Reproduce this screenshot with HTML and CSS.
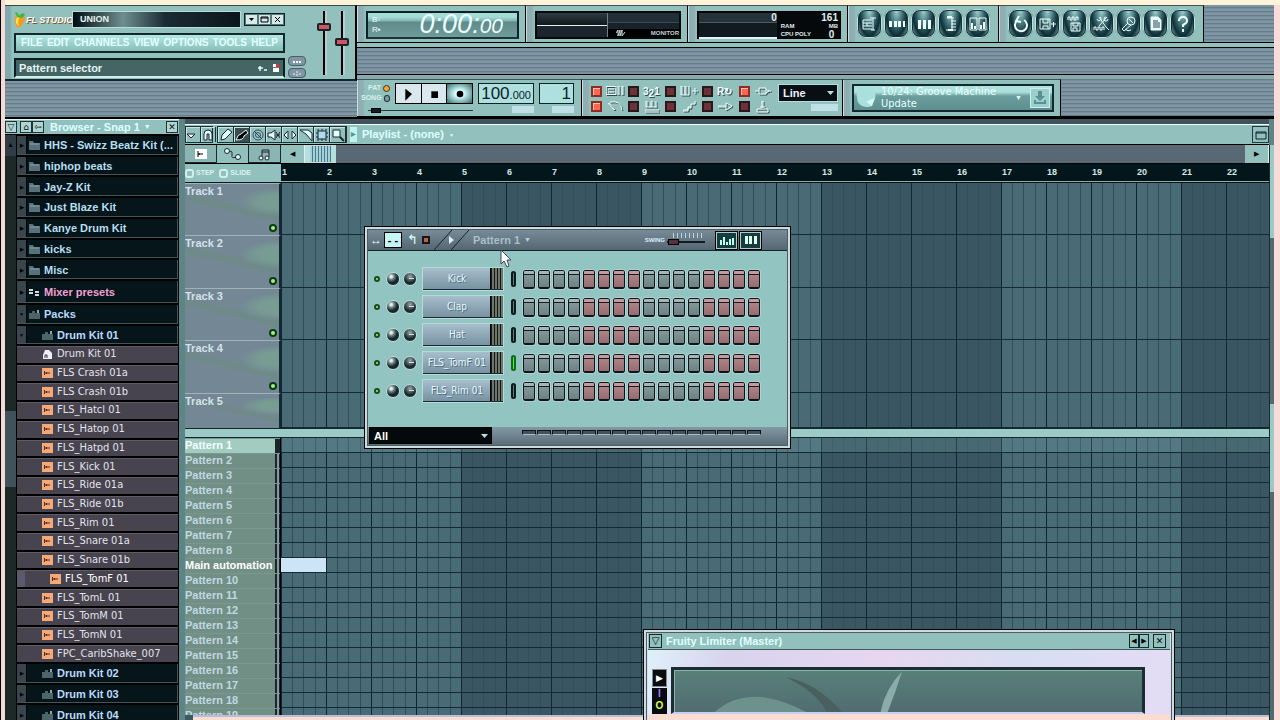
FILE: index.html
```html
<!DOCTYPE html>
<html lang="en">
<head>
<meta charset="utf-8">
<title>FL Studio - UNION</title>
<link rel="stylesheet" href="styles.css">
</head>
<body>
<div class="app">
  <header class="chrome">
    <section class="main-panel">
      <div class="main-left">
        <div class="title-row">
          <svg class="fruit" viewBox="0 0 12 17"><path d="M1 6Q6 3 11 6Q11 13 4 17Q0 14 1 6Z" fill="#f49a20"/><path d="M2 8Q4 5 6 6Q3 10 5 15Q1 13 2 8Z" fill="#ffe24a"/><path d="M1 1Q4 1 5 5Q7 1 11 3Q10 7 6 7Q2 6 1 1Z" fill="#46b53c"/></svg>
          <span class="brand">FL STUDIO</span>
          <span class="project">UNION</span>
          <span class="win-buttons">
            <button aria-label="Minimize"><svg viewBox="0 0 11 11"><path d="M3 4h5L5.500 7z"/></svg></button>
            <button aria-label="Maximize"><svg viewBox="0 0 11 11"><path d="M2 3h7v5H2zM2 4h7" fill="none" stroke="#000"/></svg></button>
            <button aria-label="Close"><svg viewBox="0 0 11 11"><path d="M3 3l5 5M8 3L3 8" stroke="#000"/></svg></button>
          </span>
        </div>
        <nav class="menu"><button>FILE</button><button>EDIT</button><button>CHANNELS</button><button>VIEW</button><button>OPTIONS</button><button>TOOLS</button><button>HELP</button></nav>
        <div class="hint"><span>Pattern selector</span><svg viewBox="0 0 24 12"><path d="M2 6h5M4 4v5M8 8h3" stroke="#dff" stroke-width="1.500"/><path d="M17 2h6v8h-6z" fill="#fff"/><path d="M20 2h3v3h-3z" fill="#d33"/><path d="M17 5.500h6" stroke="#777"/></svg></div>
      </div>
      <div class="mini-buttons"><button aria-label="Typing keyboard"><svg viewBox="0 0 10 6"><path d="M1 4h2M4 4h2M7 4h2" stroke="#eff" stroke-width="2"/></svg></button><button aria-label="MIDI"><svg viewBox="0 0 10 6"><path d="M1 4h2M4 2h2M7 4h2M4 5h2" stroke="#eff"/></svg></button></div>
      <div class="faders">
        <input class="fader" type="range" aria-label="Main volume" value="79">
        <input class="fader" type="range" aria-label="Main pitch" value="51">
      </div>
    </section>
    <div class="toolbars">
      <div class="bar">
        <section class="panel time-panel"><div class="clock"><span class="clock-mode">B▫<br>R▪</span><span class="digits">0:00:<small>00</small></span></div></section>
        <section class="panel scope-panel"><div class="scope"><div class="wave"></div><div class="scope-label"><svg viewBox="0 0 10 8"><path d="M0 4l2-3v6l2-6v6l2-6v6l3-4" fill="none" stroke="#cdd"/></svg><span>MONITOR</span></div></div></section>
        <section class="panel cpu-panel"><div class="cpu"><div class="cpu-graph">0</div><div class="cpu-info"><b>161</b><span>RAM</span><span>MB</span><span>CPU POLY</span><b>0</b></div></div></section>
        <section class="panel orbs">
          <button aria-label="Playlist"><svg viewBox="0 0 18 18"><path d="M2 5h9M2 8h9M2 11h9M2 14h9M2 5v9M9 3h6M12 3v12M10 15h4M6 8v3"/></svg></button>
          <button aria-label="Step sequencer"><svg viewBox="0 0 18 18"><path d="M1 6h3v6H1zM6 6h3v6H6zM10 6h3v6h-3zM15 6h2v6h-2z" fill="#eff" stroke="none"/></svg></button>
          <button aria-label="Piano roll"><svg viewBox="0 0 18 18"><path d="M3 5h3v9H3zM8 5h3v9H8zM13 5h3v9h-3z" fill="#eff" stroke="none"/></svg></button>
          <button aria-label="Browser"><svg viewBox="0 0 18 18"><path d="M5 3h7M9 6h5M9 9h5M9 12h5M4 15h10M10 3v12"/><path d="M5 2h5M6 15h5" stroke-width="2"/></svg></button>
          <button aria-label="Mixer"><svg viewBox="0 0 18 18"><path d="M1 3h7v12H1zM10 3h7v12h-7z"/><path d="M3 8v6M6 11v3M12 10v4M15 7v7" stroke-width="2"/></svg></button>
        </section>
        <section class="panel orbs">
          <button aria-label="Undo"><svg viewBox="0 0 18 18"><path d="M6 5a6 6 0 1 0 6 0M7 1L4 6l5 1" stroke-width="2"/></svg></button>
          <button aria-label="Save new version"><svg viewBox="0 0 18 18"><path d="M1 4h10v10H1zM4 4v4h5V4M4 14v-3h5v3M12 9h5M14.500 7v5"/></svg></button>
          <button aria-label="Render"><svg viewBox="0 0 18 18"><path d="M2 5V2h2v3h2V2h2v3h2V2h2v3M5 8h9v8H5zM7 8v3h5V8M7 16v-3h4v3"/></svg></button>
          <button aria-label="Edit audio"><svg viewBox="0 0 18 18"><path d="M6 2l7 10M14 2L6 11M4 4a2 2 0 1 0 3-2M15 4a2 2 0 1 1-2-2M1 15v-3h2v3h2v-3h2v3h2v-3h2v3M13 12l3 3"/></svg></button>
          <button aria-label="Record"><svg viewBox="0 0 18 18"><circle cx="11" cy="6" r="4"/><path d="M8 8l-6 6 2 2 7-6M9 4l4 4M5 14q3 3 6 1"/></svg></button>
          <button aria-label="Project info"><svg viewBox="0 0 18 18"><path d="M4 2h7l3 3v10H4z" fill="#eff"/><path d="M6 6h5M6 8h7M6 10h7M6 12h7" stroke="#245"/></svg></button>
          <button aria-label="Help"><svg viewBox="0 0 18 18"><path d="M5 6q0-4 4-4t4 4q0 2-4 4v2M9 14v3" stroke-width="2"/></svg></button>
        </section>
      </div>
      <div class="bar-gap"></div>
      <div class="bar">
        <section class="panel transport">
          <div class="modes"><label>PAT<input type="radio" name="mode" checked></label><label>SONG<input type="radio" name="mode"></label></div>
          <div class="play-keys">
            <button aria-label="Play"><svg viewBox="0 0 12 12"><path d="M4 2l5 4-5 5z"/></svg></button>
            <button aria-label="Stop"><svg viewBox="0 0 12 12"><path d="M4 4h5v5H4z"/></svg></button>
            <button class="rec" aria-label="Record"><svg viewBox="0 0 12 12"><circle cx="6" cy="6" r="2.500"/></svg></button>
          </div>
          <div class="lcd tempo">100<small>.000</small></div>
          <div class="lcd pat">1</div>
          <input class="position" type="range" aria-label="Song position" value="3">
          <i class="chip"></i><i class="chip"></i>
        </section>
        <section class="panel options">
          <div class="leds" id="leds"></div>
          <div class="snap"><select aria-label="Snap"><option>Line</option></select><i class="chip"></i></div>
        </section>
        <section class="panel news-panel"><div class="news"><svg class="globe" viewBox="0 0 20 20"><path d="M2 6Q8 0 17 4Q20 10 14 17Q6 19 3 13Z" fill="#a9dfdc"/><path d="M10 13l7-3-2 7z" fill="#d4f7f3"/></svg><p>10/24: Groove Machine<br>Update</p><span class="drop">▼</span><button aria-label="Download"><svg viewBox="0 0 18 18"><path d="M7 2h4v5h3l-5 5-5-5h3zM3 11v4h12v-4h-2v2H5v-2z" fill="#5c8f92"/></svg></button></div></section>
      </div>
    </div>
  </header>

  <main class="work">
    <aside class="browser">
      <div class="browser-head"><button aria-label="Browser menu">▽</button><button aria-label="Collapse">⌂</button><button aria-label="Back">⇦</button><span>Browser - Snap 1</span><i>▼</i><button aria-label="Close browser">✕</button></div>
      <div class="browser-body">
        <div class="rail"><div class="rail-up">▲</div><div class="rail-thumb"></div></div>
        <div class="tree" id="tree"></div>
      </div>
    </aside>
    <section class="playlist">
      <div class="pl-tools">
        <div class="tool-set"><button aria-label="Playlist menu"><svg viewBox="0 0 14 14"><path d="M1 6h8l-4 4z" fill="#fff" stroke="#223"/></svg></button><button aria-label="Snap"><svg viewBox="0 0 14 14"><path d="M3 12V6a4 4 0 0 1 8 0v6H8V6H6v6z" fill="#dff" stroke="#223"/></svg></button></div>
        <div class="tool-set">
          <button aria-label="Draw"><svg viewBox="0 0 14 14"><path d="M2 12l1-5 6-6 4 3-7 7z" fill="#dff" stroke="#223"/></svg></button>
          <button class="on" aria-label="Paint"><svg viewBox="0 0 14 14"><path d="M1 12q2-6 5-6l5-4 2 3-4 3q0 4-8 4z" stroke="#dff"/></svg></button>
          <button aria-label="Delete"><svg viewBox="0 0 14 14"><circle cx="7" cy="7" r="5" fill="#9cc" stroke="#345"/><circle cx="7" cy="7" r="2.500" fill="none" stroke="#345"/><path d="M3 3l8 8" stroke="#345"/></svg></button>
          <button aria-label="Mute"><svg viewBox="0 0 14 14"><path d="M1 5h3l4-3v10L4 9H1z" fill="#dff" stroke="#223"/><path d="M9 4l4 6M13 4l-4 6M9 7h4" stroke="#223"/></svg></button>
          <button aria-label="Slip"><svg viewBox="0 0 14 14"><path d="M5 3v8L1 7zM9 3v8l4-4z" fill="#dff" stroke="#223"/></svg></button>
          <button aria-label="Slice"><svg viewBox="0 0 14 14"><path d="M1 2h8l4 3v8L7 6z" fill="#dff" stroke="#223"/></svg></button>
          <button aria-label="Select"><svg viewBox="0 0 14 14"><path d="M3 3h8v8H3z" fill="#ade" stroke="#223"/><path d="M2 2h10v10H2z" fill="none" stroke="#223" stroke-dasharray="2 2"/></svg></button>
          <button aria-label="Zoom"><svg viewBox="0 0 14 14"><path d="M2 2h7v7H2z" fill="#dff" stroke="#223"/><path d="M9 9l4 4" stroke="#223" stroke-width="2"/></svg></button>
        </div>
        <h2><i>▶</i>Playlist - (none)<em>▼</em></h2>
        <button class="restore" aria-label="Restore"><svg viewBox="0 0 14 14"><path d="M2 4h10v7H2zM2 5h10" fill="none" stroke="#123"/></svg></button>
      </div>
      <div class="pl-tabs">
        <div class="tabs">
          <button aria-label="Patterns"><svg viewBox="0 0 20 14"><path d="M4 2h12v10H4z" fill="#fff"/><path d="M7 4v6M7 7h5M8 6v2" stroke="#000"/></svg></button>
          <button class="active" aria-label="Automation"><svg viewBox="0 0 20 14"><circle cx="4" cy="4" r="2.500" fill="#dff" stroke="#223"/><circle cx="15" cy="10" r="2.500" fill="#dff" stroke="#223"/><path d="M7 4q3 0 2 4t4 2" fill="none" stroke="#223"/></svg></button>
          <button aria-label="Audio"><svg viewBox="0 0 20 14"><path d="M7 11V3h7v7M7 5h7" fill="none" stroke="#223"/><circle cx="6" cy="11" r="2" fill="#dff" stroke="#223"/><circle cx="12" cy="11" r="2" fill="#dff" stroke="#223"/></svg></button>
        </div>
        <div class="hscroll"><button aria-label="Scroll left">◀</button><div class="hthumb"></div><span></span><button aria-label="Scroll right">▶</button></div>
      </div>
      <div class="ruler-row"><div class="ruler-opts"><label><input type="checkbox">STEP</label><label><input type="checkbox">SLIDE</label></div><div class="ruler" id="ruler"></div></div>
      <div class="tracks" id="tracks"></div>
      <div class="splitter"></div>
      <div class="patterns" id="patterns"></div>
      <div class="pl-end"></div>
    </section>
    <div class="vscroll"><div class="thumb-a"></div><div class="thumb-b"></div></div>
  </main>

  <section class="rack window" aria-label="Step sequencer">
    <div class="rack-title">
      <button class="bare" aria-label="Resize">↔</button><button class="dash" aria-label="Graph">- -</button><button class="bare undo" aria-label="Restore">↰</button><i class="swatch"></i>
      <svg class="slashes" viewBox="0 0 38 20"><path d="M1 20L19 0M18 20L36 0" stroke="#132128" fill="none"/><path d="M16 6l5 4-5 4z" fill="#def"/></svg>
      <span class="rack-name">Pattern 1</span><i class="arrow">▼</i>
      <label class="swing">SWING<input type="range" value="5" aria-label="Swing"></label>
      <div class="views"><button aria-label="Graph editor"><svg viewBox="0 0 18 12"><path d="M3 11V6M6 11V3M9 11V8M12 11V5M15 11V4" stroke="#bfe" stroke-width="2"/></svg></button><button aria-label="Keyboard editor"><svg viewBox="0 0 18 12"><path d="M3 2h3v8H3zM7 2h3v8H7zM12 2h3v8h-3z" fill="#dfe"/></svg></button></div>
    </div>
    <div class="channels" id="channels"></div>
    <div class="rack-foot"><select aria-label="Channel group"><option>All</option></select><div class="ticks" id="ticks"></div></div>
  </section>

  <section class="limiter window" aria-label="Fruity Limiter">
    <div class="limiter-title"><button aria-label="Plugin menu">▽</button><span>Fruity Limiter (Master)</span><button aria-label="Previous preset">◀</button><button aria-label="Next preset">▶</button><button class="x" aria-label="Close">✕</button></div>
    <div class="limiter-body">
      <div class="limiter-side"><button aria-label="Expand">▶</button><span class="io"><b>I</b><u>O</u></span></div>
      <div class="display"><svg viewBox="0 0 460 46" preserveAspectRatio="none"><path d="M40 46Q60 26 90 30Q110 34 130 46Z" fill="#6d918d"/><path d="M110 8Q140 14 165 46H150Q140 24 110 8Z" fill="#48605f"/><path d="M203 46Q208 20 224 2Q218 24 210 46Z" fill="#8bacaa"/></svg></div>
    </div>
    <div class="limiter-end"></div>
  </section>
  <svg class="cursor" viewBox="0 0 12 20"><path d="M1 1v14l3-3 3 6 2-1-2-6h4z" fill="#fff" stroke="#445"/></svg>
</div>
<script src="app.js"></script>
</body>
</html>
```
FILE: styles.css
```css
* { box-sizing: border-box; }
:root {
  --teal: #92c1bd;
  --slate: #5b6f7b;
  --ink: #0b191f;
  --stripes: repeating-linear-gradient(#8096a4 0 2px, #657c89 2px 3px, #768d9b 3px 4px);
  --arrow: url("data:image/svg+xml,%3Csvg xmlns='http://www.w3.org/2000/svg' width='7' height='4'%3E%3Cpath d='M0 0h7L3.500 4z' fill='%23bdd'/%3E%3C/svg%3E");
}
body { margin: 0; font: 11px/14px "Liberation Sans", Arial, sans-serif; }
button, select, input { margin: 0; padding: 0; border: 0; border-radius: 0; font: inherit; color: inherit; background: none; appearance: none; }
button { display: flex; align-items: center; justify-content: center; }
i, em { font-style: normal; }
.app { position: relative; display: flex; flex-direction: column; height: 100vh; overflow: hidden; padding: 5px 6px 0 5px; background: linear-gradient(90deg, #000 0 1px, #f6d9d2 1px 5px, transparent 5px), linear-gradient(#fff4d9 0 5px, #f9dcd8 5px); }

/* top chrome */
.chrome { display: flex; height: 114px; border-bottom: 2px solid #000; background: var(--stripes); }
.main-panel { display: flex; width: 352px; height: 76px; padding: 5px 0 0 9px; gap: 3px; background: linear-gradient(90deg, #7fa9ac 0 5px, var(--teal) 7px); border-top: 1px solid #31474e; border-right: 2px solid #000; border-bottom: 2px solid #14262c; }
.main-left { width: 271px; display: flex; flex-direction: column; gap: 5px; }
.title-row { display: flex; height: 17px; align-items: center; }
.fruit { flex: none; width: 12px; height: 17px; }
.brand { flex: none; width: 46px; font: italic bold 9px/16px "Liberation Sans", sans-serif; color: #fff; text-shadow: 1px 1px #7b5a2c; white-space: nowrap; }
.project { flex: 1; height: 17px; padding-left: 7px; background: linear-gradient(90deg, #000c10, #6e8e90 30%, #1b2b33 55%, #0b151b); border: 1px solid #b6dedb; color: #e6f5f5; font-size: 9px; font-weight: bold; }
.win-buttons { display: flex; margin-left: 3px; border: 1px solid #0f2026; }
.win-buttons button { width: 13px; height: 11px; background: #d5e8ea; border: 1px solid #56777b; }
.win-buttons svg { width: 11px; height: 11px; }
.menu { display: flex; justify-content: space-between; height: 20px; padding: 0 5px; background: linear-gradient(#b2e8e2, #88bcb8); border: 2px solid #14292e; color: #e4ffff; font: bold 10px/16px "Liberation Sans", sans-serif; }
.hint { display: flex; justify-content: space-between; align-items: center; height: 20px; padding: 0 3px 0 3px; background: #456564; border: 2px solid #0c1c20; border-bottom-color: #cfeeee; color: #e2f4f3; font-weight: bold; }
.hint svg { width: 24px; height: 12px; }
.mini-buttons { display: flex; flex-direction: column; justify-content: flex-end; gap: 2px; padding-bottom: 1px; }
.mini-buttons button { width: 18px; height: 10px; border: 1px solid #46606a; border-radius: 4px; background: #8195a2; }
.mini-buttons svg { width: 10px; height: 6px; }
.faders { display: flex; gap: 2px; margin-left: 7px; }
.fader { width: 16px; height: 64px; writing-mode: vertical-lr; direction: rtl; background: linear-gradient(90deg, transparent 7px, #000 7px 9px, #b4cdd6 9px 11px, transparent 11px); }
.fader::-webkit-slider-thumb { appearance: none; width: 14px; height: 8px; background: #c95862; border: 2px solid #1c2227; border-radius: 2px; }
.toolbars { flex: 1; display: flex; flex-direction: column; min-width: 0; }
.bar { display: flex; height: 38px; border-bottom: 1px solid #000; }
.bar-gap { height: 37px; border-top: 4px solid var(--teal); border-bottom: 4px solid #89aaad; box-shadow: inset 0 1px #000, inset 0 -1px #000; }
.panel { display: flex; padding: 5px 6px 3px 9px; background: linear-gradient(90deg, #c4dedd 0 1px, #8eaeb3 1px 6px, var(--teal) 8px); border-top: 1px solid #3b555b; border-right: 1px solid #000; }
.time-panel { width: 169px; }
.clock { flex: 1; display: flex; justify-content: space-between; align-items: center; padding: 0 14px 0 4px; background: linear-gradient(#a5dbd7 0 4px, #82b3b1 8px, #5f8a8a 9px, #6f9d9b); border: 2px solid #0d2227; border-bottom-color: #1d3338; color: #ecffff; }
.clock-mode { font-size: 8px; line-height: 10px; }
.digits { font: italic 27px/24px "Liberation Sans", sans-serif; }
.digits small { font-size: 21px; }
.scope-panel { width: 162px; }
.scope { flex: 1; background: linear-gradient(#222f38 0 9px, #3a4952 9px 10px, #17222b 10px); border: 2px solid #04090c; display: grid; grid-template-columns: 1fr 1fr; }
.wave { background: linear-gradient(#2e3c43, #0f171b 12px, #e2f2f3 12px 13px, #1b252b 13px); border-right: 1px solid #6b8184; }
.scope-label { display: flex; justify-content: space-between; align-self: end; padding-left: 8px; background: #000; color: #c4d3d3; font: bold 6px/8px "Liberation Sans", sans-serif; }
.scope-label svg { width: 10px; height: 8px; }
.cpu-panel { width: 160px; }
.cpu { flex: 1; display: grid; grid-template-columns: 5fr 4fr; padding: 1px; background: #05090c; border: 1px solid #000; color: #e0eded; }
.cpu-graph { background: linear-gradient(#26323a 0 9px, #4b5a60 9px 10px, #101a1f 10px); border-bottom: 2px solid #e7f4f4; text-align: right; font: bold 10px/9px "Liberation Sans", sans-serif; }
.cpu-info { display: grid; grid-template-columns: 1fr auto; padding: 0 1px 0 4px; font: bold 6px/8px "Liberation Sans", sans-serif; }
.cpu-info b { font-size: 10px; line-height: 9px; }
.cpu-info b:first-child { grid-column: 1 / 3; text-align: right; }
.orbs { gap: 2px; padding: 3px 8px 2px 9px; }
.orbs button { width: 25px; height: 29px; border: 2px solid #14343c; border-radius: 9px; outline: 1px solid #bfdedc; outline-offset: -1px; background: radial-gradient(at 50% 0, #9ed0cf, #2b5a60 50%, #0e2e35 70%, #7fb0b0); }
.orbs svg { flex: none; width: 18px; height: 18px; fill: none; stroke: #eff; stroke-width: 1; }
.transport { display: grid; grid-template-columns: 29px 78px 56px 35px; column-gap: 5px; grid-template-rows: 21px 1fr; row-gap: 2px; width: 225px; padding: 3px 6px 2px 4px; }
.modes { color: #d8f0f0; font: bold 7px/10px "Liberation Sans", sans-serif; }
.modes label { display: flex; align-items: center; justify-content: flex-end; gap: 2px; }
.modes input { width: 7px; height: 7px; border: 1px solid #23363b; border-radius: 50%; background: #7d9ea0; }
.modes input:checked { background: #ffa629; }
.play-keys { display: flex; border: 1px solid #000; }
.play-keys button { flex: 1; background: #d9e8ef; border-right: 1px solid #000; }
.play-keys .rec { background: radial-gradient(#d8ffff 25%, #35676b); border-right: 0; }
.play-keys svg { width: 16px; height: 16px; }
.lcd { background: #aee0df; border: 1px solid #0e2328; color: #0c2228; font: 17px/19px "Liberation Sans", sans-serif; text-align: right; padding-right: 2px; white-space: nowrap; }
.lcd small { font-size: 11px; }
.position { grid-column: 1 / 3; width: 105px; height: 9px; margin-left: 7px; background: linear-gradient(transparent 4px, #24393e 4px 5px, transparent 5px); }
.position::-webkit-slider-thumb { appearance: none; width: 10px; height: 5px; background: #101c20; border: 1px solid #000; }
.chip { width: 22px; height: 7px; background: #bfe0e6; justify-self: end; }
.options { width: 261px; padding: 4px 4px 2px 9px; gap: 5px; }
.leds { display: grid; grid-template-columns: repeat(5, 34px); grid-template-rows: 15px 14px; gap: 0 3px; }
.leds label { display: flex; align-items: center; gap: 4px; color: #f0ffff; }
.leds input { flex: none; width: 11px; height: 11px; background: #6b3337; border: 2px solid #2b1719; }
.leds input:checked { background: #ff6550; border-color: #8e2d25; box-shadow: inset 1px 1px #ffc0a8; }
.leds svg { width: 18px; height: 13px; fill: none; stroke: #eff; stroke-width: 1; filter: drop-shadow(1px 1px #31464c); }
.leds b { font-size: 10px; line-height: 12px; text-shadow: 1px 1px #31464c; }
.leds sub { font-size: 10px; line-height: 8px; vertical-align: -2px; }
.snap { display: flex; flex-direction: column; gap: 2px; align-items: flex-end; flex: 1; }
.snap select { width: 100%; height: 18px; padding: 0 4px; border: 1px solid #b5dcda; color: #eef; font-weight: bold; }
.snap .chip { width: 27px; }
.snap select, .rack-foot select { background: #080f14 var(--arrow) no-repeat right 3px center; }
.news-panel { width: 218px; padding: 4px 6px 4px 9px; }
.news { flex: 1; display: flex; align-items: center; gap: 3px; padding-right: 2px; background: linear-gradient(#aee0dc 0 6px, #6c9e9d 10px, #5e8f90); border: 2px solid #12292f; color: #e6ffff; }
.globe { width: 24px; height: 24px; }
.news p { flex: 1; margin: 0; font: 11px/12px "DejaVu Sans Condensed", "DejaVu Sans", sans-serif; white-space: nowrap; }
.drop { font-size: 7px; margin-right: 5px; }
.news button { width: 20px; height: 20px; background: #9bcfcc; border: 1px solid #c9f1ee; }
.news button svg { width: 18px; height: 18px; }

/* browser */
.work { flex: 1; display: flex; min-height: 0; background: #5e8585; }
.browser { width: 174px; display: flex; flex-direction: column; background: #030708; margin-right: 6px; }
.browser-head { display: flex; align-items: center; height: 16px; background: var(--teal); border-top: 1px solid #e3f5f3; border-bottom: 1px solid #000; color: #dcffff; font-weight: bold; padding-right: 1px; }
.browser-head button { width: 12px; height: 12px; border: 1px solid #1c3338; background: #b0d4d2; color: #111; font: 9px/9px "DejaVu Sans", sans-serif; }
.browser-head button:first-child { margin-right: 3px; }
.browser-head span { margin: 0 4px 0 6px; white-space: nowrap; }
.browser-head i { flex: 1; font-size: 7px; }
.browser-body { flex: 1; display: flex; min-height: 0; }
.rail { width: 11px; background: #1d2926; }
.rail-up { height: 21px; background: #303c46; color: #000; font-size: 7px; line-height: 20px; text-align: center; }
.rail-thumb { height: 76px; margin-top: 255px; background: #40525c; }
.tree { flex: 1; min-width: 0; overflow: hidden; }
.tree ul { display: grid; grid-auto-rows: 1fr; margin: 0; padding: 0; list-style: none; }
.folders { height: 145px; }
.mixer { height: 24px; }
.packs { height: 41px; }
.files { height: 318px; }
.kits { height: 62px; }
.tree button { display: flex; justify-content: flex-start; width: 100%; height: 100%; border: 1px solid #000; background: linear-gradient(90deg, #39464d 9px, #000 9px 10px, #05151a 10px); box-shadow: inset -1px -1px #46535a; color: #b5dff2; font-weight: bold; font-size: 11px; white-space: nowrap; }
.tree .caret { width: 9px; margin-right: 3px; font-size: 5px; color: #000; text-align: center; }
.tree svg { width: 11px; height: 10px; margin-right: 4px; flex: none; }
.tree .nested svg { margin-left: 13px; }
.mixer button { color: #f2a0d4; }
.packs button, .kits button { color: #b9daff; }
.files button { background: #474450; box-shadow: inset 0 1px #5f5c68; color: #e3e3ea; font: 11px/14px "DejaVu Sans Condensed", "DejaVu Sans", sans-serif; }
.files .selected button { padding-left: 8px; color: #fff; background: linear-gradient(90deg, #5a5a6c 8px, #474450 8px); }

/* playlist */
.playlist { flex: 1; display: flex; flex-direction: column; min-width: 0; border-top: 5px solid #40525c; background: #3b5863; overflow: hidden; }
.pl-tools { display: flex; align-items: center; flex: none; height: 21px; gap: 3px; background: var(--teal); border-top: 1px solid #eff; border-bottom: 1px solid #000; }
.tool-set { display: flex; border: 1px solid #1d3136; }
.tool-set button { width: 15px; height: 15px; border-right: 1px solid #1d3136; box-shadow: inset 1px 1px #c4e5e2; }
.tool-set:first-child { width: 28px; }
.tool-set + .tool-set { margin-left: 1px; }
.tool-set svg { width: 14px; height: 14px; flex: none; }
.tool-set .on { background: #3c4d50; }
.tool-set + .tool-set button { width: 16px; }
.pl-tools h2 { flex: 1; margin: 0; font-size: 11px; color: #dcffff; }
.pl-tools h2 i { display: inline-block; margin-right: 5px; padding: 0 1px; background: #c1f3f1; color: #598; font-size: 6px; line-height: 15px; vertical-align: middle; }
.pl-tools h2 em { margin-left: 5px; font-size: 5px; vertical-align: middle; }
.restore { width: 17px; height: 17px; border: 1px solid #23393e; }
.restore svg { width: 14px; height: 14px; }
.pl-tabs { flex: none; display: flex; height: 19px; border-bottom: 1px solid #000; background: #586875; }
.tabs { display: flex; width: 96px; }
.tabs button { flex: 1; background: #8bb5b2; border: 1px solid #152b30; border-width: 0 1px 1px 0; }
.tabs .active { background: var(--teal); border-bottom: 0; }
.tabs svg { width: 20px; height: 14px; }
.hscroll { flex: 1; display: flex; }
.hscroll button { width: 24px; background: var(--teal); color: #000; font-size: 7px; border-right: 1px solid #d4f4f2; }
.hthumb { width: 31px; border: 2px solid #b5dedc; border-width: 1px 5px; background: repeating-linear-gradient(90deg, #a3d0d5 0 2px, #4c7991 2px 3px); }
.hscroll span { flex: 1; }
.ruler-row { flex: none; display: flex; height: 19px; border-bottom: 1px solid #0c171b; }
.ruler-opts { display: flex; align-items: center; gap: 5px; flex: none; width: 96px; background: var(--teal); color: #d9f3f2; font: bold 7px/8px "Liberation Sans", sans-serif; }
.ruler-opts label { display: flex; align-items: center; gap: 2px; }
.ruler-opts input { width: 9px; height: 9px; border: 2px solid #d0efee; border-radius: 3px; }
.ruler { flex: 1; display: grid; grid-auto-flow: column; grid-auto-columns: 45px; overflow: hidden; background: #03161b; border-bottom: 1px solid #93a9a9; color: #d5e8e8; font: bold 9px/17px "Liberation Sans", sans-serif; padding-left: 1px; }
.lane { flex: 1; background: repeating-linear-gradient(90deg, #0c2733 0 1px, transparent 1px 11px, #304e5b 11px 12px, transparent 12px 22px, #304e5b 22px 23px, transparent 23px 34px, #304e5b 34px 35px, transparent 35px 45px), repeating-linear-gradient(90deg, #496b76 0 180px, #3a5661 180px 360px); border-bottom: 1px solid #102b36; }
.tracks { flex: none; display: grid; grid-template-rows: 52px 53px 52px 53px 35px; }
.track { display: flex; }
.track header { display: flex; justify-content: space-between; width: 96px; padding: 0 2px 3px 0; color: #d3e3ea; font-weight: bold; border-top: 1px solid #9eb4b9; border-right: 2px solid #14272f; background: radial-gradient(ellipse at 100% 35%, #779c92 0 15%, transparent 30%), linear-gradient(13deg, transparent 45%, #6d8b85 52%, transparent 60%), #738795; }
.track header i { align-self: flex-end; width: 8px; height: 8px; border: 2px solid #0c3a14; border-radius: 50%; background: #9cf47c; }
.track:last-child header i { display: none; }
.splitter { flex: none; height: 10px; background: #9ccac7; border-top: 1px solid #14272d; border-bottom: 1px solid #14272d; }
.patterns { flex: 1; min-height: 0; overflow: hidden; }
.pattern { display: flex; height: 15px; }
.pattern header { width: 96px; color: #c0d8e1; font-weight: bold; border-right: 1px solid #000; background: linear-gradient(90deg, #728f86 0 90px, #18272a 90px 92px, #8a9998 92px 94px, #18272a 94px); box-shadow: inset 0 1px #789992; white-space: nowrap; }
.pattern:first-child header { background: linear-gradient(90deg, #a3ccc0 0 90px, #18272a 90px); color: #f1ffff; }
.pattern:first-child .lane { box-shadow: inset 0 20px #80b4bb33; }
.pattern.main header { color: #fff; }
.clip { display: block; width: 45px; height: 14px; background: #cde4f6; }
.pl-end { flex: none; height: 5px; margin-left: 8px; background: #fbdcd2; border-top: 2px solid #b8bed6; }
.vscroll { width: 5px; margin-top: 26px; background: #53686f; border-left: 1px solid #172b31; }
.thumb-a { height: 93px; background: #9cc9c5; }
.thumb-b { height: 88px; margin-top: 166px; background: #9cc9c5; }

/* floating windows */
.window { position: absolute; display: flex; flex-direction: column; border: 1px solid #000; outline: 1px solid #4e5d63; outline-offset: -4px; box-shadow: inset 0 0 0 2px #cbdcdf, inset 0 0 0 3px #111; }
.rack { left: 364px; top: 226px; width: 427px; height: 223px; padding: 3px; background: #92c4c2; }
.rack-title { display: flex; align-items: center; height: 21px; flex: none; background: linear-gradient(#778c98, #546671); border-bottom: 1px solid #16252b; color: #bcd2db; }
.bare { width: 16px; color: #dff; font-size: 12px; }
.dash { width: 18px; height: 16px; background: #c6f5f5; border: 1px solid #000; color: #000; font-weight: bold; }
.undo { width: 20px; font-size: 13px; }
.swatch { width: 8px; height: 8px; background: #a26c50; border: 2px solid #1c1512; }
.slashes { width: 38px; height: 20px; margin: 0 2px 0 3px; }
.rack-name { font-size: 11px; font-weight: bold; color: #a9c0c8; }
.arrow { flex: 1; margin-left: 4px; font-size: 7px; }
.swing { display: flex; align-items: center; gap: 2px; font: bold 6px/8px "Liberation Sans", sans-serif; color: #def; }
.swing input { width: 38px; height: 18px; background: linear-gradient(transparent 10px, #111d22 10px 12px, transparent 12px), repeating-linear-gradient(90deg, #bfd3da 0 1px, transparent 1px 4px) no-repeat 6px 2px / 32px 5px; }
.swing input::-webkit-slider-thumb { appearance: none; width: 11px; height: 6px; margin-top: 3px; background: #54323f; border: 1px solid #000; }
.views { display: flex; gap: 1px; margin: 0 25px 0 10px; }
.views button { width: 23px; height: 19px; background: #173c40; border: 2px solid #a9cdcb; outline: 1px solid #000; outline-offset: -1px; }
.views svg { width: 18px; height: 12px; }
.channels { flex: 1; padding-top: 14px; }
.channel { display: flex; align-items: center; height: 28px; padding-left: 6px; }
.channel > i { width: 6px; height: 6px; border: 2px solid #174d1c; border-radius: 50%; background: #a6ef81; }
.knob { width: 14px; height: 14px; margin-left: 6px; border: 1px solid #b9dcdb; border-radius: 50%; background: radial-gradient(circle at 35% 30%, #e5eeee 0 1px, #71868a 3px, #18262a 6px); }
.knob + .knob { margin-left: 3px; background: linear-gradient(transparent 5px, #cfe4e4 5px 6px, transparent 6px) no-repeat 5px 0 / 5px 12px, radial-gradient(circle at 50% 30%, #9babad, #1c2a2e 6px); }
.channel .name { width: 82px; height: 24px; margin-left: 5px; padding-right: 12px; border: 1px solid #1b2d33; border-bottom-width: 2px; outline: 1px solid #b6dadb; outline-offset: -1px; background: linear-gradient(#a7becb, #7892a2); position: relative; color: #e4f7ff; text-shadow: 1px 1px #526c7c; font: 10px/14px "DejaVu Sans Condensed", "DejaVu Sans", sans-serif; white-space: nowrap; }
.name::after { content: ""; position: absolute; right: 0; top: 0; bottom: 0; width: 12px; background: repeating-linear-gradient(90deg, #101b1e 0 1px, #6f7669 1px 3px); border-left: 1px solid #000; }
.channel .sel { width: 5px; height: 16px; margin: 0 7px; border: 2px solid #0c191d; border-radius: 3px; background: #607a7f; }
.channel.picked .sel { background: #46f43c; border-color: #126a17; }
.steps { display: grid; grid-template-columns: repeat(16, 12px); column-gap: 3px; }
.steps button { height: 19px; border: 1px solid #0c1519; border-bottom-width: 2px; border-radius: 2px; background: linear-gradient(#a5b6b6 0 3px, #0f1b1f 3px 4px, #83989a 4px, #6d8183); outline: 1px solid #b1d0d1; outline-offset: 0; }
.steps .red { background: linear-gradient(#c69a9e 0 3px, #0f1b1f 3px 4px, #af8387 4px, #946c6f); }
.rack-foot { display: flex; flex: none; height: 18px; background: linear-gradient(#8299a4, #5b6d77); padding-left: 1px; }
.rack-foot select { width: 123px; height: 17px; padding: 0 4px; color: #fff; font-weight: bold; border: 1px solid #000; background-color: #04090c; }
.ticks { display: grid; grid-template-columns: repeat(16, 14px); column-gap: 1px; margin: 3px 0 0 30px; }
.ticks i { height: 5px; background: #40525a; border: 1px solid #0b1519; border-bottom-color: #a9bcc2; }
.limiter { left: 643px; top: 629px; width: 532px; bottom: -4px; padding: 2px 4px 0; background: #dcdcf0; }
.limiter-title { display: flex; align-items: center; flex: none; height: 18px; background: var(--teal); border-bottom: 1px solid #42595d; color: #e0ffff; font-weight: bold; padding: 0 4px 0 1px; }
.limiter-title span { flex: 1; margin-left: 4px; }
.limiter-title button { width: 10px; height: 14px; border: 1px solid #142a2e; color: #000; font: 7px/8px "DejaVu Sans", sans-serif; }
.limiter-title button:first-child { width: 13px; font-size: 10px; }
.limiter-title .x { width: 13px; margin-left: 4px; font-size: 9px; }
.limiter-body { flex: 1; display: flex; gap: 4px; min-height: 0; padding: 17px 25px 0 4px; background: linear-gradient(100deg, #dff0fa, #d8d4ec 15%, #e7d6f0 45%, #d7def0 70%, #e4dcf6); }
.limiter-side { width: 15px; display: flex; flex-direction: column; gap: 1px; margin-top: 2px; }
.limiter-side button { height: 18px; flex: none; background: #080c10; border: 1px solid #888; color: #fff; font-size: 9px; }
.io { flex: 1; display: flex; flex-direction: column; align-items: center; background: #080c10; font: bold 10px/12px "Liberation Sans", sans-serif; }
.io b { color: #a37cff; }
.io u { color: #d9ff59; text-decoration: none; }
.display { flex: 1; border: 3px solid #1c2d31; border-bottom: 2px solid #c6cff1; box-shadow: inset 1px 1px #8bb3ad; background: linear-gradient(#58807a, #516c71); }
.display svg { display: block; width: 100%; height: 100%; }
.limiter-end { flex: none; height: 9px; background: #fbdcd2; }
.cursor { position: absolute; left: 500px; top: 249px; width: 12px; height: 20px; }
```
FILE: app.js
```js
const $ = id => document.getElementById(id);
const folder = '<svg viewBox="0 0 11 10"><path d="M0 1h4l1 2h6v7H0z" fill="#58717a"/><path d="M1 4h9" stroke="#89a4ab"/></svg>';
const openFolder = '<svg viewBox="0 0 11 10"><path d="M0 4h3v-2h3v2h5v6H0z" fill="#4d6468"/><path d="M8 1h2v3h-2z" fill="#8aa"/></svg>';
const wav = '<svg viewBox="0 0 11 10"><path d="M0 0h11v10H0z" fill="#f3a97a"/><path d="M2.500 3v4M2 5h6M4.500 4v2" fill="none" stroke="#5a2a14"/></svg>';
const doc = '<svg viewBox="0 0 11 10"><path d="M3 1h4l3 3v6H1V6z" fill="#eef"/><path d="M3 9V6h2v3" stroke="#333" fill="none"/></svg>';
const mix = '<svg viewBox="0 0 11 10"><path d="M0 3h4M0 6h4M6 5h4M6 8h4" stroke="#cdd" stroke-width="2"/></svg>';

function group(cls, names, icon, caret) {
  const items = names.map((n, i) => {
    const pic = cls === 'files' && i === 0 ? doc : icon;
    const nested = cls === 'files' || cls === 'kits' || (cls === 'packs' && i === 1);
    return `<li class="${nested ? 'nested' : ''} ${n === 'FLS_TomF 01' ? 'selected' : ''}"><button><span class="caret">${caret}</span>${pic}${n}</button></li>`;
  }).join('');
  return `<ul class="${cls}">${items}</ul>`;
}
$('tree').innerHTML =
  group('folders', ['HHS - Swizz Beatz Kit (...', 'hiphop beats', 'Jay-Z Kit', 'Just Blaze Kit', 'Kanye Drum Kit', 'kicks', 'Misc'], folder, '▶') +
  group('mixer', ['Mixer presets'], mix, '▶') +
  group('packs', ['Packs', 'Drum Kit 01'], openFolder, '▼') +
  group('files', ['Drum Kit 01', 'FLS Crash 01a', 'FLS Crash 01b', 'FLS_Hatcl 01', 'FLS_Hatop 01', 'FLS_Hatpd 01', 'FLS_Kick 01', 'FLS_Ride 01a', 'FLS_Ride 01b', 'FLS_Rim 01', 'FLS_Snare 01a', 'FLS_Snare 01b', 'FLS_TomF 01', 'FLS_TomL 01', 'FLS_TomM 01', 'FLS_TomN 01', 'FPC_CaribShake_007'], wav, '') +
  group('kits', ['Drum Kit 02', 'Drum Kit 03', 'Drum Kit 04'], openFolder, '▶');

$('ruler').innerHTML = Array.from({ length: 22 }, (_, i) => `<span>${i + 1}</span>`).join('');
$('tracks').innerHTML = [1, 2, 3, 4, 5].map(n => `<div class="track"><header>Track ${n}<i></i></header><div class="lane"></div></div>`).join('');
$('patterns').innerHTML = Array.from({ length: 19 }, (_, i) => {
  const main = i === 8;
  return `<div class="pattern ${main ? 'main' : ''}"><header>${main ? 'Main automation' : 'Pattern ' + (i + 1)}</header><div class="lane">${main ? '<span class="clip"></span>' : ''}</div></div>`;
}).join('');

const steps = Array.from({ length: 16 }, (_, i) => `<button class="${Math.floor(i / 4) % 2 ? 'red' : ''}" aria-label="Step ${i + 1}"></button>`).join('');
$('channels').innerHTML = ['Kick', 'Clap', 'Hat', 'FLS_TomF 01', 'FLS_Rim 01'].map((n, i) =>
  `<div class="channel ${i === 3 ? 'picked' : ''}"><i></i><button class="knob" aria-label="Pan"></button><button class="knob" aria-label="Volume"></button><button class="name">${n}</button><button class="sel" aria-label="Select ${n}"></button><div class="steps">${steps}</div></div>`).join('');
$('ticks').innerHTML = '<i></i>'.repeat(16);

const s = d => `<svg viewBox="0 0 18 13"><path d="${d}"/></svg>`;
const leds = [
  ['Typing keyboard', 1, s('M0 1.500h10v8H0zM2 4h6M2 7h6M12 1v9M13 1v9M16 1v9M17 1v9')],
  ['Countdown', 0, '<b>3<sub>2</sub>1</b>'],
  ['Blend notes', 0, s('M1 1v9M2 1v9M5 1v9M6 1v9M9 1v9M1 10h8M12 6h6M15 3v6')],
  ['Loop record', 0, '<b>R↻</b>'],
  ['Step edit', 1, s('M1 6h4M13 6h4M5 3h7v6H5zM12 4l3 2-3 2')],
  ['Scroll', 1, s('M2 3l6 7M3 3l6 7M4 2Q15 0 16 10')],
  ['Wait for input', 0, s('M3 1v6M4 1v6M8 1v6M9 1v6M13 1v6M3 7h11M2 10h14M2 12h14')],
  ['Metronome', 0, s('M3 11h5v-3h3V4h4V1M3 10h5v-3h3')],
  ['Step', 0, s('M1 6h8M1 7h8M9 3v7l6-4z')],
  ['Stamp', 0, s('M8 1v7M9 1v7M3 9h11v3H3zM6 7h5')]
];
$('leds').innerHTML = leds.map(([n, on, pic]) => `<label><input type="checkbox" aria-label="${n}" ${on ? 'checked' : ''}>${pic}</label>`).join('');
```
